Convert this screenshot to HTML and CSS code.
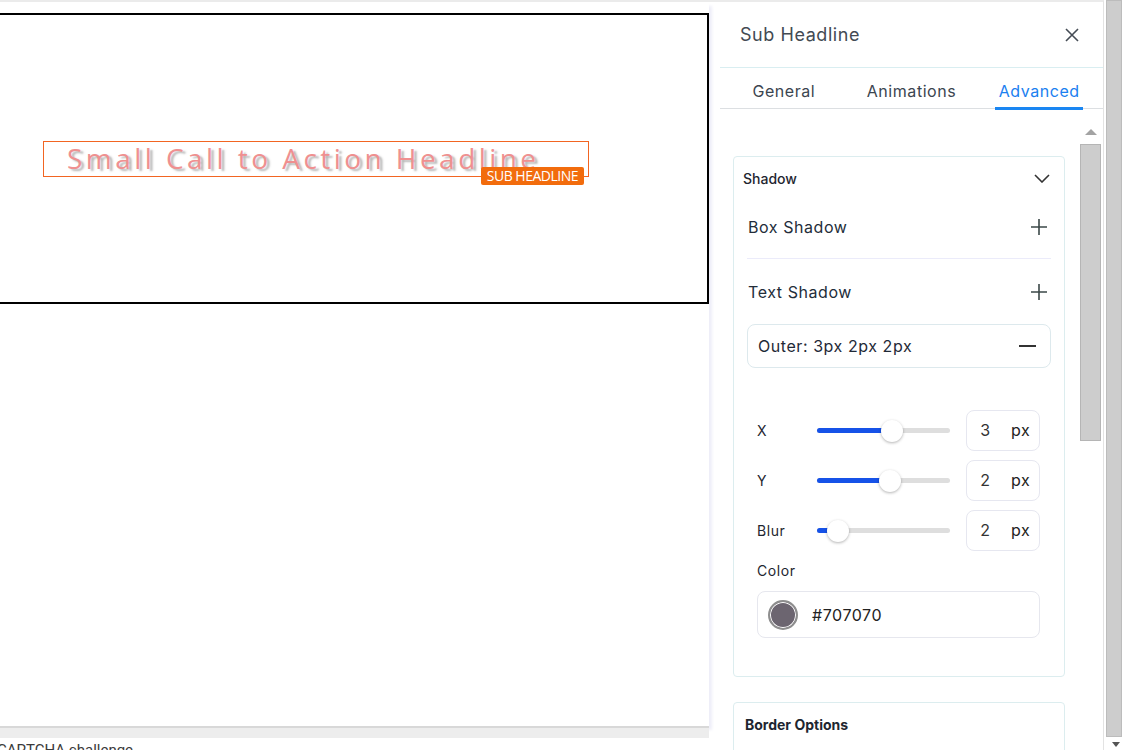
FILE: index.html
```html
<!DOCTYPE html>
<html lang="en">
<head>
    <meta charset="UTF-8">
    <meta name="viewport" content="width=device-width, initial-scale=1.0">
    <title>Sub Headline - Editor</title>
    <link rel="stylesheet" href="styles.css">
</head>
<body>
    <div class="app">
        <main class="stage">
            <div class="canvas">
                <section class="block">
                    <div class="headline">
                        <h2 class="headline-text">Small Call to Action Headline</h2>
                        <span class="badge">SUB HEADLINE</span>
                    </div>
                </section>
            </div>
            <p class="captcha">CAPTCHA challenge</p>
        </main>

        <aside class="panel">
            <header class="panel-head">
                <h1>Sub Headline</h1>
                <button class="close" aria-label="Close">
                    <svg width="14" height="14" viewBox="0 0 14 14"><path d="M1 1l12 12M13 1L1 13" stroke="#454c55" stroke-width="1.6" fill="none"/></svg>
                </button>
            </header>
            <nav class="tabs">
                <span class="tab">General</span>
                <span class="tab">Animations</span>
                <span class="tab active">Advanced</span>
            </nav>

            <div class="panel-body">
                <div class="panel-scroll">
                    <section class="group">
                        <div class="group-head">
                            <span>Shadow</span>
                            <svg width="16" height="9" viewBox="0 0 16 9"><path d="M1 1l7 7 7-7" stroke="#333" stroke-width="1.6" fill="none"/></svg>
                        </div>
                        <div class="group-inner">
                            <div class="shadow-row">
                                <span>Box Shadow</span>
                                <svg width="16" height="16" viewBox="0 0 16 16"><path d="M8 0v16M0 8h16" stroke="#3b4848" stroke-width="1.6"/></svg>
                            </div>
                            <div class="divider"></div>
                            <div class="shadow-row tall">
                                <span>Text Shadow</span>
                                <svg width="16" height="16" viewBox="0 0 16 16"><path d="M8 0v16M0 8h16" stroke="#3b4848" stroke-width="1.6"/></svg>
                            </div>
                            <div class="shadow-item">
                                <span>Outer: 3px 2px 2px</span>
                                <svg width="17" height="2" viewBox="0 0 17 2"><path d="M0 1h17" stroke="#333" stroke-width="2"/></svg>
                            </div>

                            <div class="sliders">
                                <div class="slider-row">
                                    <label>X</label>
                                    <div class="track"><div class="fill" style="width: 75px"></div></div>
                                    <div class="num"><span class="val">3</span><span class="unit">px</span></div>
                                </div>
                                <div class="slider-row">
                                    <label>Y</label>
                                    <div class="track"><div class="fill" style="width: 73px"></div></div>
                                    <div class="num"><span class="val">2</span><span class="unit">px</span></div>
                                </div>
                                <div class="slider-row">
                                    <label>Blur</label>
                                    <div class="track"><div class="fill" style="width: 21px"></div></div>
                                    <div class="num"><span class="val">2</span><span class="unit">px</span></div>
                                </div>
                                <div class="color-label">Color</div>
                                <div class="color-field">
                                    <span class="swatch"></span>
                                    <span>#707070</span>
                                </div>
                            </div>
                        </div>
                    </section>

                    <section class="group group-next">
                        <div class="group-title">Border Options</div>
                    </section>
                </div>
                <div class="vscroll">
                    <div class="arrow-up"></div>
                    <div class="vthumb"></div>
                </div>
            </div>
        </aside>

        <div class="page-scroll">
            <div class="page-thumb"></div>
            <div class="arrow-down"></div>
        </div>
    </div>
</body>
</html>
```

FILE: styles.css
```css
body {
    margin: 0;
    font-family: Inter, "Noto Sans", sans-serif;
    background: #fff;
    overflow: hidden;
}
.app {
    display: flex;
    height: 750px;
}

/* canvas side */
.stage {
    width: 720px;
    flex: none;
    border-top: 2px solid #ebebeb;
    overflow: hidden;
}
.canvas {
    width: 709px;
    height: 724px;
    box-sizing: border-box;
    padding-top: 11px;
    background: #fff;
    box-shadow: 0 2px 0 #d8d8d8, 0 12px 0 #ededed, 3px 4px 3px #eeeef8;
}
.block {
    margin-left: -2px;
    width: 711px;
    height: 291px;
    box-sizing: border-box;
    border: 2px solid #000;
    padding-top: 126px;
}
.headline {
    position: relative;
    margin-left: 43px;
    width: 546px;
    height: 36px;
    box-sizing: border-box;
    border: 1px solid #f26522;
    padding: 2px 0 0 23px;
}
.headline-text {
    margin: 0;
    font-family: "Open Sans", sans-serif;
    font-weight: 400;
    font-size: 28px;
    line-height: 28px;
    letter-spacing: 3.45px;
    white-space: nowrap;
    color: #ef9090;
    text-shadow: 3px 2px 2px rgba(112, 112, 112, 0.5);
}
.badge {
    position: absolute;
    right: 4px;
    top: 25px;
    height: 18px;
    line-height: 18px;
    padding: 0 6px;
    border-radius: 2px;
    background: #f26c0d;
    color: #fff;
    font-family: "Open Sans", sans-serif;
    font-size: 14px;
    letter-spacing: -0.5px;
}
.captcha {
    margin: 15px 0 0 -3px;
    font-family: Roboto, sans-serif;
    font-size: 15px;
    color: #3a3a3a;
}

/* settings panel */
.panel {
    width: 384px;
    flex: none;
    box-sizing: border-box;
    border-top: 2px solid #ebebeb;
    border-right: 1px solid #e3e3e3;
    display: flex;
    flex-direction: column;
    letter-spacing: 0.035em;
}
.panel-head {
    height: 66px;
    display: flex;
    align-items: center;
    justify-content: space-between;
    padding: 0 24px 0 20px;
    box-sizing: border-box;
    border-bottom: 1px solid #d9eef1;
}
.panel-head h1 {
    margin: 0;
    font-size: 18px;
    font-weight: 400;
    color: #434a53;
}
.close {
    border: 0;
    background: none;
    padding: 0;
    display: flex;
}
.tabs {
    display: flex;
    height: 40px;
    border-bottom: 1px solid #dcdfe2;
}
.tab {
    flex: 1;
    text-align: center;
    font-size: 16px;
    line-height: 40px;
    padding-top: 3px;
    box-sizing: border-box;
    color: #3b4550;
    position: relative;
}
.tab.active {
    color: #1a80f0;
}
.tab.active::after {
    content: "";
    position: absolute;
    left: 20px;
    right: 20px;
    bottom: -2px;
    height: 3px;
    background: #1a86f2;
}
.panel-body {
    flex: 1;
    display: flex;
    overflow: hidden;
}
.panel-scroll {
    width: 360px;
    flex: none;
    box-sizing: border-box;
    padding: 47px 15px 0 13px;
}
.group {
    border: 1px solid #dcedef;
    border-radius: 4px;
}
.group-head {
    height: 43px;
    display: flex;
    align-items: center;
    justify-content: space-between;
    padding: 0 14px 0 9px;
    font-size: 14px;
    font-weight: 500;
    color: #1e2630;
    letter-spacing: 0;
}
.group-inner {
    padding: 1px 13px 38px;
}
.shadow-row {
    height: 52px;
    display: flex;
    align-items: center;
    justify-content: space-between;
    padding: 0 4px 0 1px;
    font-size: 16px;
    color: #232d3a;
}
.shadow-row.tall {
    height: 65px;
}
.divider {
    margin-top: 5px;
    height: 1px;
    background: #ebebfa;
}
.shadow-item {
    height: 44px;
    box-sizing: border-box;
    border: 1px solid #dde9ed;
    border-radius: 8px;
    display: flex;
    align-items: center;
    justify-content: space-between;
    padding: 0 14px 0 10px;
    font-size: 16px;
    color: #1f2937;
}
.sliders {
    margin-top: 37px;
    padding: 0 11px 0 10px;
}
.slider-row {
    height: 50px;
    display: flex;
    align-items: center;
}
.slider-row label {
    width: 60px;
    font-size: 14px;
    color: #1e2630;
}
.track {
    position: relative;
    width: 133px;
    height: 5px;
    border-radius: 3px;
    background: #dedede;
}
.fill {
    position: relative;
    height: 100%;
    border-radius: 3px;
    background: #1652e8;
}
.fill::after {
    content: "";
    position: absolute;
    right: -11px;
    top: -8px;
    width: 22px;
    height: 22px;
    border-radius: 50%;
    background: #fff;
    box-shadow: 0 1px 3px rgba(0, 0, 0, 0.3);
}
.num {
    margin-left: 16px;
    width: 74px;
    height: 41px;
    box-sizing: border-box;
    border: 1px solid #e6e7f0;
    border-radius: 8px;
    display: flex;
    align-items: center;
    font-size: 16px;
}
.val {
    width: 37px;
    text-align: center;
    color: #333;
}
.unit {
    margin-left: 7px;
    color: #222;
}
.color-label {
    margin-top: 6px;
    line-height: 20px;
    font-size: 14px;
    color: #1e2630;
}
.color-field {
    margin-top: 10px;
    height: 47px;
    box-sizing: border-box;
    border: 1px solid #e6e7ee;
    border-radius: 8px;
    display: flex;
    align-items: center;
    gap: 14px;
    padding-left: 10px;
    font-size: 16px;
    color: #222;
}
.swatch {
    width: 30px;
    height: 30px;
    box-sizing: border-box;
    border-radius: 50%;
    border: 2px solid #8e8e8e;
    background: #6c6570;
    box-shadow: inset 0 0 0 1px #fff;
}
.group-next {
    margin-top: 25px;
    height: 60px;
}
.group-title {
    padding: 13px 0 0 11px;
    font-size: 14px;
    font-weight: 700;
    color: #1e2630;
    letter-spacing: 0;
}

/* inner scrollbar */
.vscroll {
    width: 21px;
    padding-top: 20px;
    box-sizing: border-box;
}
.arrow-up {
    width: 0;
    height: 0;
    margin: 0 auto;
    border-left: 6px solid transparent;
    border-right: 6px solid transparent;
    border-bottom: 6px solid #a3a3a3;
}
.vthumb {
    margin-top: 9px;
    height: 297px;
    box-sizing: border-box;
    background: #cdcdcd;
    border: 1px solid #b5b5b5;
}

/* page scrollbar */
.page-scroll {
    width: 16px;
    margin-left: 2px;
    display: flex;
    flex-direction: column;
}
.page-thumb {
    height: 737px;
    box-sizing: border-box;
    background: #cdcdcd;
    border: 1px solid #bcbcbc;
}
.arrow-down {
    width: 0;
    height: 0;
    margin: 5px 0 0 6px;
    border-left: 4px solid transparent;
    border-right: 4px solid transparent;
    border-top: 5px solid #555;
}
```
